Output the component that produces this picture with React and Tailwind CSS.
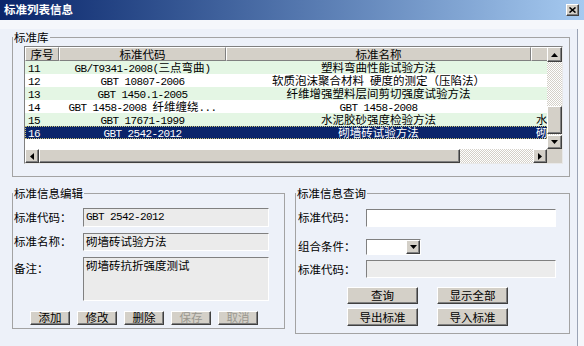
import React from "react";

const rows = [
  { no: "11", code: "GB/T9341-2008(三点弯曲)", name: "塑料弯曲性能试验方法", note: "" },
  { no: "12", code: "GBT 10807-2006", name: "软质泡沫聚合材料 硬度的测定（压陷法）", note: "" },
  { no: "13", code: "GBT 1450.1-2005", name: "纤维增强塑料层间剪切强度试验方法", note: "" },
  { no: "14", code: "GBT 1458-2008 纤维缠绕...", name: "GBT 1458-2008", note: "" },
  { no: "15", code: "GBT 17671-1999", name: "水泥胶砂强度检验方法", note: "水泥胶砂强度" },
  { no: "16", code: "GBT 2542-2012", name: "砌墙砖试验方法", note: "砌墙砖抗折强度测试" },
];

// 3D controls (Win2000 look)
const raised =
  "bg-[#d4d0c8] border border-t-white border-l-white border-r-[#404040] border-b-[#404040] shadow-[inset_-1px_-1px_0_#808080]";
const sunken = "border border-t-[#808080] border-l-[#808080] border-r-white border-b-white";
const checker = "bg-[image:repeating-conic-gradient(#d4d0c8_0_25%,#ffffff_0_50%)] bg-[length:2px_2px]";

// latin runs in mono, chinese in CJK font
const Txt = ({ text }) =>
  text
    .split(/([\x20-\x7e]+)/)
    .filter(Boolean)
    .map((part, i) =>
      /^[\x20-\x7e]+$/.test(part) ? (
        <span
          key={i}
          className="inline-block whitespace-pre leading-[13px] font-['Liberation_Mono',monospace] text-[11px] tracking-[-0.6px]"
        >
          {part}
        </span>
      ) : (
        <span key={i} className="inline-block leading-[13px]">
          {part}
        </span>
      )
    );

const Arrow = ({ dir }) => {
  if (dir === "up")
    return (
      <svg width="7" height="4" viewBox="0 0 7 4">
        <polygon points="0,4 3.5,0 7,4" fill="#000" />
      </svg>
    );
  if (dir === "down")
    return (
      <svg width="7" height="4" viewBox="0 0 7 4">
        <polygon points="0,0 3.5,4 7,0" fill="#000" />
      </svg>
    );
  if (dir === "left")
    return (
      <svg width="4" height="7" viewBox="0 0 4 7">
        <polygon points="4,0 0,3.5 4,7" fill="#000" />
      </svg>
    );
  return (
    <svg width="4" height="7" viewBox="0 0 4 7">
      <polygon points="0,0 4,3.5 0,7" fill="#000" />
    </svg>
  );
};

const ArrowBtn = ({ dir, className = "" }) => (
  <div className={`${raised} flex items-center justify-center shrink-0 ${className}`}>
    <Arrow dir={dir} />
  </div>
);

const Grupo = ({ titulo, className = "", children }) => (
  <fieldset className={`border border-[#a3a3a3] ${className}`}>
    <legend className="px-[1px] leading-[16px] text-[11.5px]">{titulo}</legend>
    {children}
  </fieldset>
);

const Boton = ({ children, disabled, className = "" }) => (
  <div
    className={`${raised} flex items-center justify-center text-[11.5px] leading-none ${
      disabled ? "text-[#9a9890]" : "text-black"
    } ${className}`}
  >
    {children}
  </div>
);

const celdaCab = "shrink-0 border border-t-white border-l-white border-r-[#808080] border-b-[#808080] text-center";

const Tabla = () => (
  <div className="w-[539px] h-[118px] border border-t-[#808080] border-l-[#808080] border-r-[#e8e8e8] border-b-[#e8e8e8] bg-white flex flex-col">
    <div className="flex h-[102px]">
      <div className="w-[522px] overflow-hidden">
        {/* cabecera */}
        <div className="flex h-[14px] bg-[#d4d0c8] text-[11.5px] leading-[12px]">
          <div className={`w-[34px] ${celdaCab}`}>序号</div>
          <div className={`w-[167px] ${celdaCab}`}>标准代码</div>
          <div className={`w-[305px] ${celdaCab}`}>标准名称</div>
          <div className={`w-[60px] ${celdaCab}`} />
        </div>
        {/* filas */}
        {rows.map((r, i) => {
          const sel = i === rows.length - 1;
          const bg = sel
            ? "bg-[#0a246a] text-white outline-1 outline-dotted outline-[#c8c070] -outline-offset-1"
            : i % 2 === 0
            ? "bg-[#e4f6e4]"
            : "bg-white";
          return (
            <div key={r.no} className={`flex h-[13px] text-[11.5px] leading-[13px] whitespace-nowrap ${bg}`}>
              <div className="w-[34px] shrink-0 pl-[3px]">
                <Txt text={r.no} />
              </div>
              <div className="w-[167px] shrink-0 text-center">
                <Txt text={r.code} />
              </div>
              <div className="w-[305px] shrink-0 text-center">
                <Txt text={r.name} />
              </div>
              <div className="w-[80px] shrink-0 pl-[5px]">
                <Txt text={r.note} />
              </div>
            </div>
          );
        })}
      </div>
      {/* barra vertical */}
      <div className="w-[15px] flex flex-col">
        <ArrowBtn dir="up" className="h-[15px]" />
        <div className={`flex-1 flex flex-col justify-end pb-[1px] ${checker}`}>
          <div className={`${raised} h-[28px]`} />
        </div>
        <ArrowBtn dir="down" className="h-[14px]" />
      </div>
    </div>
    {/* barra horizontal */}
    <div className="flex h-[14px]">
      <ArrowBtn dir="left" className="w-[14px]" />
      <div className={`flex-1 flex ${checker}`}>
        <div className={`${raised} w-[421px]`} />
      </div>
      <ArrowBtn dir="right" className="w-[14px]" />
      <div className="w-[15px] bg-[#d4d0c8]" />
    </div>
  </div>
);

export default function App() {
  return (
    <div className="w-[584px] h-[346px] overflow-hidden bg-[#f5f7fb] text-black font-['Noto_Sans_CJK_SC',sans-serif]">
      {/* barra de título */}
      <div className="h-[20px] flex items-center pl-[4px] pr-[5px] bg-gradient-to-r from-[#0a246a] to-[#a6caf0]">
        <span className="text-white font-bold text-[11.5px] leading-none">标准列表信息</span>
        <div className={`${raised} ml-auto w-[13px] h-[12px] flex items-center justify-center`}>
          <svg width="7" height="6" viewBox="0 0 7 6">
            <path d="M0.5 0.5 L6.5 5.5 M6.5 0.5 L0.5 5.5" stroke="#000" strokeWidth="1.6" />
          </svg>
        </div>
      </div>

      <div className="w-[578px] h-[324px] bg-[#edf1f9] border-r border-b-2 border-r-[#9aa3b5] border-b-[#555555]">
        {/* 标准库 */}
        <Grupo titulo="标准库" className="mt-[9px] ml-[12px] w-[558px] h-[148px]">
          <div className="pl-[11px] pt-[1px]">
            <Tabla />
          </div>
        </Grupo>

        <div className="flex items-start gap-[10px] ml-[12px] mt-[8px]">
          {/* 标准信息编辑 */}
          <Grupo titulo="标准信息编辑" className="w-[273px] h-[144px]">
            <div className="pl-[1px] text-[11.5px]">
              <div className="flex items-center h-[19px] mt-[7px]">
                <div className="w-[69px]">标准代码：</div>
                <div className={`${sunken} bg-[#ebebeb] w-[186px] h-[19px] pl-[2px] flex items-center whitespace-nowrap`}>
                  <Txt text="GBT 2542-2012" />
                </div>
              </div>
              <div className="flex items-center h-[18px] mt-[6px]">
                <div className="w-[69px]">标准名称：</div>
                <div className={`${sunken} bg-[#ebebeb] w-[186px] h-[18px] pl-[2px] flex items-center leading-none`}>
                  砌墙砖试验方法
                </div>
              </div>
              <div className="flex items-start mt-[6px]">
                <div className="w-[69px] pt-[3px]">备注：</div>
                <div className={`${sunken} bg-[#ebebeb] w-[186px] h-[44px] pl-[2px] leading-[14px]`}>
                  砌墙砖抗折强度测试
                </div>
              </div>
              <div className="flex gap-[7px] mt-[10px] pl-[16px]">
                <Boton className="w-[40px] h-[14px]">添加</Boton>
                <Boton className="w-[40px] h-[14px]">修改</Boton>
                <Boton className="w-[40px] h-[14px]">删除</Boton>
                <Boton disabled className="w-[40px] h-[14px]">保存</Boton>
                <Boton disabled className="w-[40px] h-[14px]">取消</Boton>
              </div>
            </div>
          </Grupo>

          {/* 标准信息查询 */}
          <Grupo titulo="标准信息查询" className="w-[275px] h-[149px]">
            <div className="pl-[2px] text-[11.5px]">
              <div className="flex items-center mt-[8px]">
                <div className="w-[68px]">标准代码：</div>
                <div className={`${sunken} bg-white w-[190px] h-[18px]`} />
              </div>
              <div className="flex items-center mt-[11px]">
                <div className="w-[68px]">组合条件：</div>
                <div className={`${sunken} bg-white w-[55px] h-[16px] flex justify-end`}>
                  <ArrowBtn dir="down" className="w-[14px] h-[14px]" />
                </div>
              </div>
              <div className="flex items-center mt-[5px]">
                <div className="w-[68px]">标准代码：</div>
                <div className={`${sunken} bg-[#ececec] w-[190px] h-[18px]`} />
              </div>
              <div className="flex gap-[19px] mt-[9px] pl-[49px]">
                <Boton className="w-[71px] h-[17px]">查询</Boton>
                <Boton className="w-[71px] h-[17px]">显示全部</Boton>
              </div>
              <div className="flex gap-[19px] mt-[4px] pl-[49px]">
                <Boton className="w-[71px] h-[18px]">导出标准</Boton>
                <Boton className="w-[71px] h-[18px]">导入标准</Boton>
              </div>
            </div>
          </Grupo>
        </div>
      </div>
    </div>
  );
}
